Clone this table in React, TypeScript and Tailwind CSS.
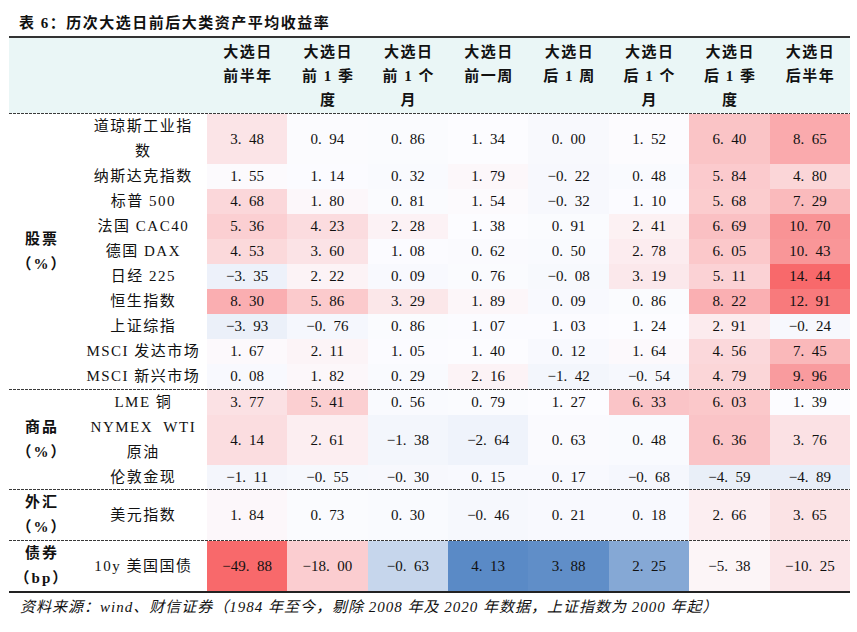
import React from "react";

type Row = { name: React.ReactNode; h: string; values: number[] };
type Group = { label: string[]; rows: Row[]; bond?: boolean };

const RED = [248, 105, 107];
const WHITE = [252, 252, 255];
const BLUE = [90, 138, 198];

function mix(a: number[], t: number) {
  const c = WHITE.map((w, i) => Math.round(w + (a[i] - w) * Math.min(1, Math.max(0, t))));
  return `rgb(${c[0]}, ${c[1]}, ${c[2]})`;
}

// excel-like red/white/blue scale
function heat(v: number, bond?: boolean) {
  if (bond) {
    const lo = -49.88, mid = -3.0, hi = 4.13;
    return v < mid ? mix(RED, (mid - v) / (mid - lo)) : mix(BLUE, (v - mid) / (hi - mid));
  }
  const lo = -49.88, mid = 1.39, hi = 14.44;
  return v > mid ? mix(RED, (v - mid) / (hi - mid)) : mix(BLUE, (mid - v) / (mid - lo));
}

function fmt(v: number) {
  const [a, b] = Math.abs(v).toFixed(2).split(".");
  return `${v < 0 ? "−" : ""}${a}.\u2002${b}`;
}

const headers = [
  ["大选日", "前半年"],
  ["大选日", "前 1 季", "度"],
  ["大选日", "前 1 个", "月"],
  ["大选日", "前一周"],
  ["大选日", "后 1 周"],
  ["大选日", "后 1 个", "月"],
  ["大选日", "后 1 季", "度"],
  ["大选日", "后半年"],
];

const groups: Group[] = [
  {
    label: ["股票", "（%）"],
    rows: [
      { name: <>道琼斯工业指<br />数</>, h: "h-[50px]", values: [3.48, 0.94, 0.86, 1.34, 0.0, 1.52, 6.4, 8.65] },
      { name: "纳斯达克指数", h: "h-[25px]", values: [1.55, 1.14, 0.32, 1.79, -0.22, 0.48, 5.84, 4.8] },
      { name: "标普 500", h: "h-[25px]", values: [4.68, 1.8, 0.81, 1.54, -0.32, 1.1, 5.68, 7.29] },
      { name: "法国 CAC40", h: "h-[25px]", values: [5.36, 4.23, 2.28, 1.38, 0.91, 2.41, 6.69, 10.7] },
      { name: "德国 DAX", h: "h-[25px]", values: [4.53, 3.6, 1.08, 0.62, 0.5, 2.78, 6.05, 10.43] },
      { name: "日经 225", h: "h-[25px]", values: [-3.35, 2.22, 0.09, 0.76, -0.08, 3.19, 5.11, 14.44] },
      { name: "恒生指数", h: "h-[25px]", values: [8.3, 5.86, 3.29, 1.89, 0.09, 0.86, 8.22, 12.91] },
      { name: "上证综指", h: "h-[25px]", values: [-3.93, -0.76, 0.86, 1.07, 1.03, 1.24, 2.91, -0.24] },
      { name: "MSCI 发达市场", h: "h-[25px]", values: [1.67, 2.11, 1.05, 1.4, 0.12, 1.64, 4.56, 7.45] },
      { name: "MSCI 新兴市场", h: "h-[25px]", values: [0.08, 1.82, 0.29, 2.16, -1.42, -0.54, 4.79, 9.96] },
    ],
  },
  {
    label: ["商品", "（%）"],
    rows: [
      { name: "LME 铜", h: "h-[25px]", values: [3.77, 5.41, 0.56, 0.79, 1.27, 6.33, 6.03, 1.39] },
      { name: <>NYMEX&nbsp; WTI<br />原油</>, h: "h-[50px]", values: [4.14, 2.61, -1.38, -2.64, 0.63, 0.48, 6.36, 3.76] },
      { name: "伦敦金现", h: "h-[24px]", values: [-1.11, -0.55, -0.3, 0.15, 0.17, -0.68, -4.59, -4.89] },
    ],
  },
  {
    label: ["外汇", "（%）"],
    rows: [{ name: "美元指数", h: "h-[50px]", values: [1.84, 0.73, 0.3, -0.46, 0.21, 0.18, 2.66, 3.65] }],
  },
  {
    label: ["债券", "（bp）"],
    bond: true,
    rows: [{ name: "10y 美国国债", h: "h-[50px]", values: [-49.88, -18.0, -0.63, 4.13, 3.88, 2.25, -5.38, -10.25] }],
  },
];

function Dashed() {
  return <div className="h-px w-full bg-[repeating-linear-gradient(90deg,#3a3a3a_0_3px,transparent_3px_4px)]" />;
}

export default function App() {
  return (
    <div className="w-[857px] h-[632px] bg-white text-[#111] font-[family-name:'Liberation_Serif','Noto_Sans_CJK_SC',serif]">
      <div className="h-[36px] pl-[19px] pt-[13px] text-[15px] leading-[20px] font-bold tracking-[1.5px]">
        表 6：历次大选日前后大类资产平均收益率
      </div>
      <div className="ml-[9px] w-[841px] border-t-2 border-[#333]">
        <div className="flex h-[75px] bg-[#eaf6f6]">
          <div className="w-[71px]" />
          <div className="w-[127px]" />
          {headers.map((h, i) => (
            <div key={i} className="w-[80.4px] pt-[2px] pl-[1.5px] text-center text-[15px] leading-[24px] font-bold tracking-[1.5px]">
              {h.map((l, j) => (
                <div key={j}>{l}</div>
              ))}
            </div>
          ))}
        </div>
        <Dashed />
        {groups.map((g, gi) => (
          <React.Fragment key={gi}>
            <div className="flex">
              <div className="w-[71px] pr-[5px] flex flex-col items-center justify-center text-[15px] leading-[25px] font-bold tracking-[2px]">
                {g.label.map((l, j) => (
                  <div key={j}>{l}</div>
                ))}
              </div>
              <div className="flex flex-col">
                {g.rows.map((r, ri) => (
                  <div key={ri} className={`flex ${r.h}`}>
                    <div className="w-[127px] flex items-center justify-center text-center text-[15px] leading-[25px] tracking-[1.5px]">
                      <div>{r.name}</div>
                    </div>
                    {r.values.map((v, vi) => (
                      <div
                        key={vi}
                        className="w-[80.4px] flex items-center justify-center text-[15px]"
                        style={{ backgroundColor: heat(v, g.bond) }}
                      >
                        {fmt(v)}
                      </div>
                    ))}
                  </div>
                ))}
              </div>
            </div>
            {gi < groups.length - 1 ? <Dashed /> : null}
          </React.Fragment>
        ))}
        <div className="h-[2px] bg-[#222]" />
      </div>
      <div className="pl-[20px] pt-[4px] text-[15px] leading-[20px] italic tracking-[1px]">
        资料来源：wind、财信证券（1984 年至今，剔除 2008 年及 2020 年数据，上证指数为 2000 年起）
      </div>
    </div>
  );
}
